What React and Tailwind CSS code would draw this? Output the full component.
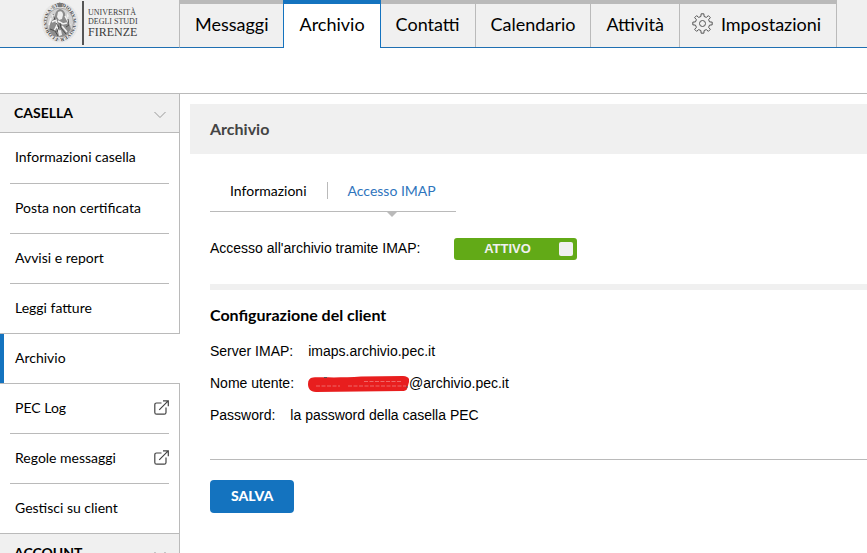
import { useId } from "react";

function Crest() {
  const ring = useId();
  return (
    <svg viewBox="0 0 40 42" className="h-[42px] w-10 overflow-visible" aria-hidden="true">
      <defs>
        <path id={ring} d="M20 37.500 A15.500 16.500 0 0 1 20 5 A15.500 16.500 0 0 1 20 37.500" />
      </defs>
      <ellipse cx="20" cy="21.500" rx="18.500" ry="20" fill="#e6e6e6" />
      <text className="font-['Liberation_Serif',serif] text-[5px] font-bold" fill="#444">
        <textPath href={`#${ring}`}>·FLORENTINA·STVDIORVM·VNIVERSITAS</textPath>
      </text>
      <ellipse cx="20" cy="21.500" rx="13.500" ry="14.500" fill="#d2d2d2" stroke="#999" strokeWidth="0.8" />
      <path d="M17 2h6l-1 4h-4z" fill="#777" />
      <path d="M15 16c0-5 2-7 5-8 4 1 6 4 5 8l4 5 2 7-4 6-6 2-8-1-4-6 1-7z" fill="#8c8c8c" />
      <path d="M18 11c3-2 5 0 5 3l-1 4-3 1-2-3z" fill="#eee" />
      <path d="M12 21l4-2 1 5-3 6M18 20l5 3 4-1M17 26l4 8M22 25l5 6M25 15l5 9M11 17l-2 7" fill="none" stroke="#f2f2f2" strokeWidth="1.5" />
      <path d="M10 28l5 2 3 5M20 22l1 5 5 6M13 13l2 6M28 18l1 6-3 2M16 22l3 4-2 5" fill="none" stroke="#444" strokeWidth="0.9" />
      <path d="M11 13l3 1-1 3zM27 12l2 3-2 2zM18 30l3-1 1 5-3 1z" fill="#eee" />
    </svg>
  );
}

function Gear() {
  const teeth = [0, 45, 90, 135, 180, 225, 270, 315];
  const pts = teeth
    .map((t) =>
      [
        [7.2, -13],
        [9.8, -8],
        [9.8, 8],
        [7.2, 13],
      ]
        .map(([r, o]) => {
          const a = ((t + o) * Math.PI) / 180;
          return `${(10.5 + r * Math.cos(a)).toFixed(2)},${(10.5 + r * Math.sin(a)).toFixed(2)}`;
        })
        .join(" ")
    )
    .join(" ");
  return (
    <svg viewBox="0 0 21 21" className="size-[21px]" fill="none" stroke="#555" strokeLinejoin="round" aria-hidden="true">
      <polygon points={pts} strokeWidth="1" />
      <circle cx="10.5" cy="10.5" r="3" strokeWidth="1" />
    </svg>
  );
}

function External() {
  return (
    <svg viewBox="0 0 15 15" className="size-[15px]" fill="none" stroke="#444" strokeWidth="1.2" aria-hidden="true">
      <path d="M7.5 3H2.6Q.8 3 .8 4.8v7.6q0 1.8 1.8 1.8h7.6q1.8 0 1.8-1.8V7.5" />
      <path d="M9 .8h5.3v5.4M14.2.8L5.2 9.8" />
    </svg>
  );
}

function Chevron() {
  return (
    <svg viewBox="0 0 12 8" className="mt-1 h-2 w-3" fill="none" stroke="#999" aria-hidden="true">
      <path d="M.5 1L6 6.5 11.500 1" />
    </svg>
  );
}

const tabs = [
  { label: "Messaggi", border: "border-r-0" },
  { label: "Archivio", active: true },
  { label: "Contatti", border: "border-r" },
  { label: "Calendario", border: "border-r" },
  { label: "Attività", border: "border-r" },
  { label: "Impostazioni", border: "border-r", icon: true },
];

function TopTab({ label, active, border, icon }) {
  if (active) {
    return (
      <a href="#archivio" aria-current="page" className="flex flex-col border-t-4 border-[#1473bf] bg-white">
        <span className="flex flex-1 items-center border-x border-[#1473bf] px-[15px] pb-[5px]">{label}</span>
      </a>
    );
  }
  return (
    <a href={`#${label}`} className="flex flex-col border-b border-b-[#1f6fb2] bg-[#f0f0f0]">
      <span className="h-1 bg-[#bababa]" />
      <span className={`flex flex-1 items-center gap-2 border-[#bababa] pb-1 ${icon ? "pl-3" : "pl-[15px]"} pr-[15px] ${border}`}>
        {icon && <Gear />}
        {label}
      </span>
    </a>
  );
}

const items = [
  { label: "Informazioni casella", size: "h-[51px]" },
  { label: "Posta non certificata" },
  { label: "Avvisi e report" },
  { label: "Leggi fatture", last: true },
  { label: "Archivio", active: true },
  { label: "PEC Log", external: true },
  { label: "Regole messaggi", external: true },
  { label: "Gestisci su client", last: true },
];

function SideItem({ label, size = "h-[50px]", last, active, external }) {
  if (active) {
    return (
      <li>
        <a href="#archivio" aria-current="page" className={`flex ${size} items-center border-b border-[#bababa]`}>
          <span className="flex flex-1 items-center self-stretch border-l-4 border-[#1473bf] pb-[2px] pl-[11px]">{label}</span>
        </a>
      </li>
    );
  }
  return (
    <li className={`border-r border-[#bababa] ${last ? "border-b" : "px-[10px]"}`}>
      <a
        href={`#${label}`}
        className={`flex items-center justify-between pb-[2px] ${last ? "h-[49px] pl-[15px]" : `${size} border-b border-[#bababa] pl-[5px]`}`}
      >
        {label}
        {external && <External />}
      </a>
    </li>
  );
}

function SideHeading({ children }) {
  return (
    <h2>
      <button
        type="button"
        className="flex h-[39px] w-full items-center justify-between border-r border-b border-[#bababa] bg-[#f0f0f0] pr-[13px] pl-[14px] font-bold"
      >
        {children}
        <Chevron />
      </button>
    </h2>
  );
}

export default function App() {
  return (
    <div className="flex h-screen flex-col overflow-hidden bg-white font-[Lato,sans-serif] text-sm text-black">
      <header className="flex h-12 shrink-0 text-lg">
        <div className="flex w-[180px] shrink-0 items-start gap-[2px] border-r border-b border-r-[#bababa] border-b-[#1f6fb2] bg-[#f0f0f0] pt-px pl-10">
          <Crest />
          <div className="flex h-11 flex-col border-l-2 border-[#555] pt-[7px] pl-1 font-['Liberation_Serif',serif] text-[#3c3c3c]">
            <span className="text-[8px] leading-[9px]">UNIVERSITÀ</span>
            <span className="text-[8px] leading-[9px]">DEGLI STUDI</span>
            <span className="text-[12px] leading-[13px]">FIRENZE</span>
          </div>
        </div>
        <nav className="flex" aria-label="Principale">
          {tabs.map((t) => (
            <TopTab key={t.label} {...t} />
          ))}
        </nav>
        <div className="flex-1 border-b border-[#1f6fb2] bg-[#f0f0f0]" />
      </header>

      <div className="mt-[45px] flex min-h-0 flex-1 border-t border-[#bababa]">
        <aside className="w-[180px] shrink-0">
          <SideHeading>CASELLA</SideHeading>
          <ul>
            {items.map((i) => (
              <SideItem key={i.label} {...i} />
            ))}
          </ul>
          <SideHeading>ACCOUNT</SideHeading>
        </aside>

        <main className="flex-1 pt-[10px] pl-[10px]">
          <h1 className="flex h-[50px] items-center bg-[#f0f0f0] pl-5 text-base font-bold text-[#444]">Archivio</h1>
          <div className="pl-5">
            <nav className="mt-7 flex w-fit border-b border-[#bababa] pb-3" aria-label="Archivio">
              <a href="#informazioni" className="border-r border-[#bababa] px-5 leading-[17px]">
                Informazioni
              </a>
              <a href="#imap" aria-current="page" className="relative px-5 leading-[17px] text-[#2f75bd]">
                Accesso IMAP
                <span className="absolute top-[30px] left-1/2 -translate-x-1/2 border-x-5 border-t-5 border-x-transparent border-t-[#bababa]" />
              </a>
            </nav>

            <div className="mt-[26px] flex h-[22px] items-start font-['Liberation_Sans',Arial,sans-serif]">
              <label htmlFor="imap-access" className="w-[244px] leading-5">
                Accesso all'archivio tramite IMAP:
              </label>
              <label className="flex h-[22px] w-[123px] items-center rounded-[3px] bg-[#62aa17] pr-1 pl-[2px] text-[#f0f0f0]">
                <span className="flex-1 text-center text-[13px] font-bold">ATTIVO</span>
                <input id="imap-access" type="checkbox" defaultChecked className="size-[14px] appearance-none rounded-[2px] bg-[#f0f0f0]" />
              </label>
            </div>

            <hr className="mt-6 border-t-6 border-[#f0f0f0]" />
            <h2 className="mt-[13px] text-base font-bold">Configurazione del client</h2>
            <dl className="mt-2 font-['Liberation_Sans',Arial,sans-serif] leading-8">
              <div className="flex gap-[15px]">
                <dt>Server IMAP:</dt>
                <dd>imaps.archivio.pec.it</dd>
              </div>
              <div className="flex gap-[14px]">
                <dt>Nome utente:</dt>
                <dd className="flex items-center">
                  <svg viewBox="0 0 101 18" className="h-[18px] w-[101px]" aria-hidden="true">
                    <path
                      d="M5 3.500C15 3 35 4 53 2.500L95 2C100 2 102 5 101 8L99 15Q98 17 94 17L8 18C2 18 0 14 0 10Q0 4 5 3.500Z"
                      fill="#e81e1e"
                    />
                    <path d="M56 7.500h38M8 12h24M40 12h58" stroke="#f08a8a" strokeWidth="0.7" strokeDasharray="4 1.500" />
                    <path d="M16 3.500h3M98 13h2" stroke="#555" />
                  </svg>
                  @archivio.pec.it
                </dd>
              </div>
              <div className="flex gap-[15px]">
                <dt>Password:</dt>
                <dd>la password della casella PEC</dd>
              </div>
            </dl>
            <hr className="mt-7 border-[#bababa]" />
            <button type="button" className="mt-5 h-[33px] rounded-[4px] bg-[#1473bf] px-[21px] pb-[2px] font-black text-white">
              SALVA
            </button>
          </div>
        </main>
      </div>
    </div>
  );
}
